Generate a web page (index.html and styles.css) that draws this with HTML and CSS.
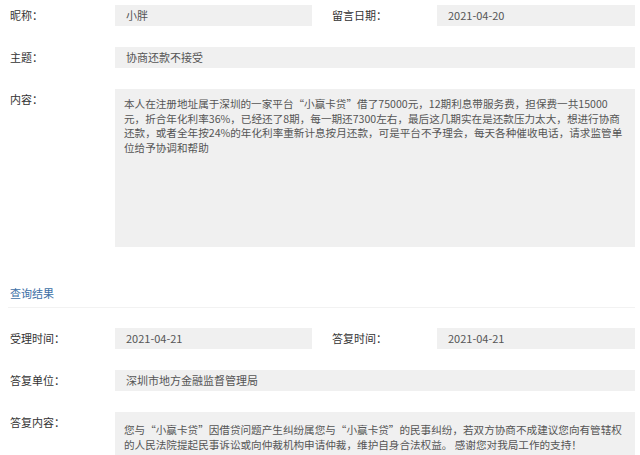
FILE: index.html
```html
<!DOCTYPE html>
<html lang="zh-CN">
<head>
    <meta charset="UTF-8">
    <meta name="viewport" content="width=device-width, initial-scale=1.0">
    <title>留言详情</title>
    <link rel="stylesheet" href="styles.css">
</head>
<body>
    <div class="row half">
        <div class="field">
            <span class="label">昵称：</span>
            <div class="value">小胖</div>
        </div>
        <div class="field">
            <span class="label">留言日期：</span>
            <div class="value">2021-04-20</div>
        </div>
    </div>

    <div class="row">
        <div class="field">
            <span class="label">主题：</span>
            <div class="value">协商还款不接受</div>
        </div>
    </div>

    <div class="row">
        <div class="field multi">
            <span class="label">内容：</span>
            <div class="value text tall">本人在注册地址属于深圳的一家平台“小赢卡贷”借了75000元，12期利息带服务费，担保费一共15000元，折合年化利率36%，已经还了8期，每一期还7300左右，最后这几期实在是还款压力太大，想进行协商还款，或者全年按24%的年化利率重新计息按月还款，可是平台不予理会，每天各种催收电话，请求监管单位给予协调和帮助</div>
        </div>
    </div>

    <h2 class="section-title">查询结果</h2>

    <div class="row half">
        <div class="field">
            <span class="label">受理时间：</span>
            <div class="value">2021-04-21</div>
        </div>
        <div class="field">
            <span class="label">答复时间：</span>
            <div class="value">2021-04-21</div>
        </div>
    </div>

    <div class="row">
        <div class="field">
            <span class="label">答复单位：</span>
            <div class="value">深圳市地方金融监督管理局</div>
        </div>
    </div>

    <div class="row">
        <div class="field multi">
            <span class="label">答复内容：</span>
            <div class="value text reply">您与“小赢卡贷”因借贷问题产生纠纷属您与“小赢卡贷”的民事纠纷，若双方协商不成建议您向有管辖权的人民法院提起民事诉讼或向仲裁机构申请仲裁，维护自身合法权益。 感谢您对我局工作的支持！</div>
        </div>
    </div>
</body>
</html>
```

FILE: styles.css
```css
body {
    font-family: "Microsoft YaHei", "Noto Sans CJK SC", sans-serif;
    font-size: 11px;
    margin: 0;
    padding: 5px 5px 0 10px;
    background-color: #fff;
    color: #333;
}
.row {
    margin-bottom: 21px;
}
.half {
    display: grid;
    grid-template-columns: 302px 303px;
    column-gap: 20px;
}
.field {
    display: flex;
    align-items: center;
}
.field.multi {
    align-items: flex-start;
}
.label {
    width: 105px;
    flex-shrink: 0;
    line-height: 21px;
}
.value {
    flex: 1;
    background-color: #f0f0f0;
    color: #555;
    height: 21px;
    line-height: 21px;
    padding: 0 11px;
}
.value.text {
    height: auto;
    font-size: 10.6px;
    line-height: 14.5px;
    padding: 8px 3px 8px 9px;
    box-sizing: border-box;
}
.value.tall {
    min-height: 158px;
    padding-right: 11px;
}
.value.reply {
    padding-top: 11px;
    min-height: 60px;
}
.section-title {
    font-size: 11px;
    font-weight: normal;
    color: #3d6fa6;
    margin: 36px 0 20px -2px;
    padding: 0 0 4px 2px;
    line-height: 20px;
    border-bottom: 1px solid #f2f2f2;
}
```
